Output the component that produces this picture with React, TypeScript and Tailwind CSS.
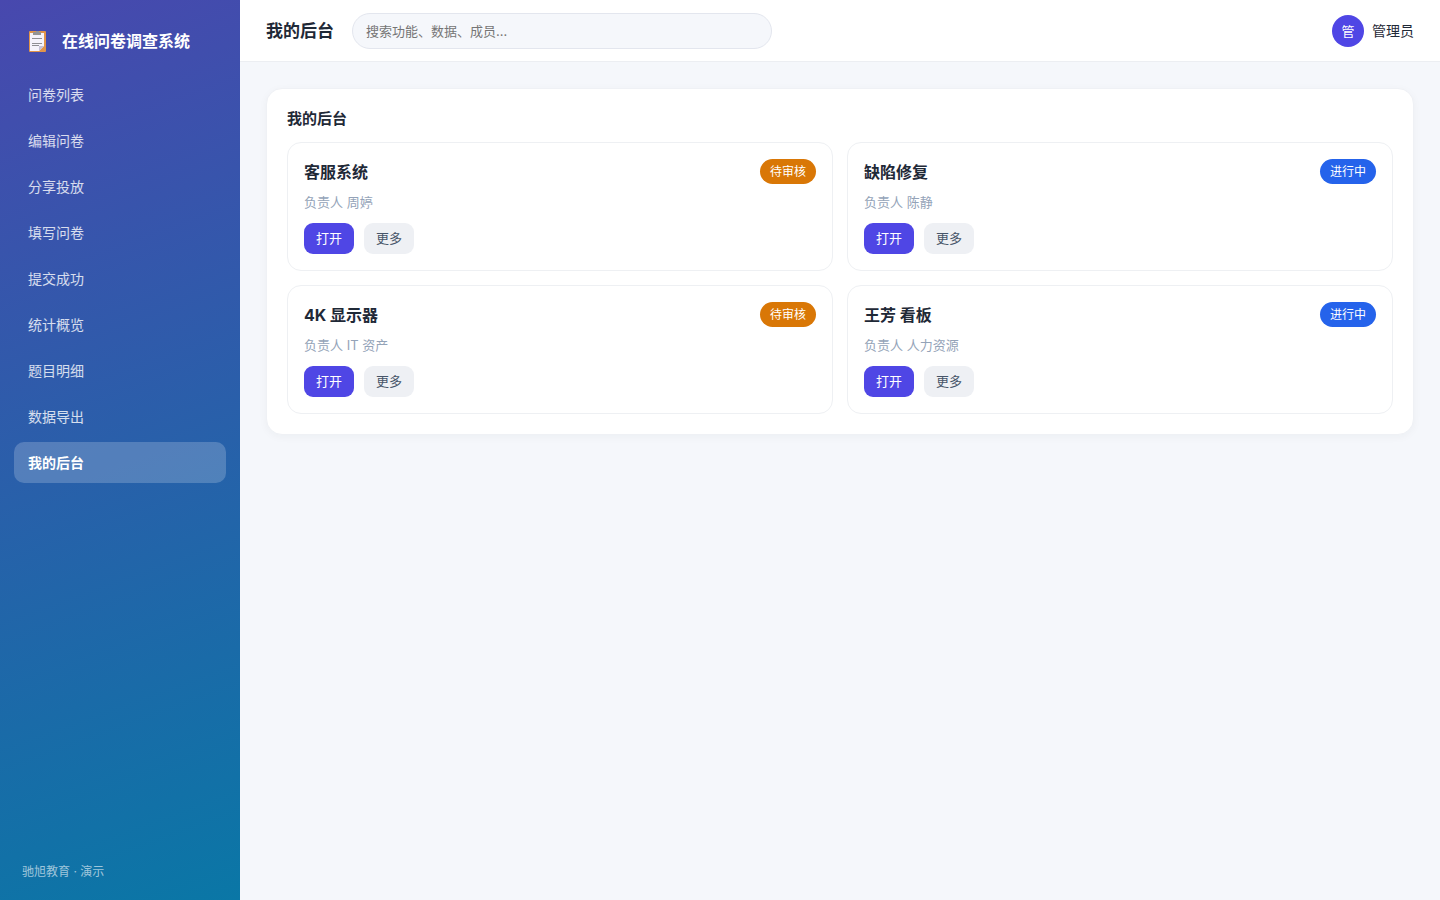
import React from "react";

const menu = [
  "问卷列表",
  "编辑问卷",
  "分享投放",
  "填写问卷",
  "提交成功",
  "统计概览",
  "题目明细",
  "数据导出",
  "我的后台",
];

const cards = [
  { title: "客服系统", owner: "周婷", status: "待审核" },
  { title: "缺陷修复", owner: "陈静", status: "进行中" },
  { title: "4K 显示器", owner: "IT 资产", status: "待审核" },
  { title: "王芳 看板", owner: "人力资源", status: "进行中" },
];

const ClipboardIcon = () => (
  <svg width="17" height="21" viewBox="0 0 17 21" aria-hidden="true">
    <rect width="17" height="21" rx="1" fill="#e0944a" />
    <path d="M1 2h14v13l-5 5H1z" fill="#f5f3fb" />
    <path d="M15 15l-5 5v-5z" fill="#c5c1d8" />
    <path d="M4 1h3V0h3v1h2v3H4z" fill="#949494" />
    <path d="M3 7.5h10M3 12.5h10M3 14.5h7" stroke="#8f8f94" />
  </svg>
);

const Sidebar = () => {
  return (
    <aside className="flex w-60 shrink-0 flex-col bg-[linear-gradient(160deg,#4848ae,#0a77a6)] px-[14px] py-5 text-white">
      <div className="flex items-center gap-4 px-[15px] pb-3">
        <ClipboardIcon />
        <span className="text-base leading-[42px] font-bold">
          在线问卷调查系统
        </span>
      </div>
      <nav className="flex flex-col gap-[5px]">
        {menu.map((item) => (
          <a
            key={item}
            href="#"
            className={
              item === "我的后台"
                ? "rounded-[10px] bg-white/20 px-[14px] py-[10px] text-sm leading-[21px] font-bold"
                : "rounded-[10px] px-[14px] py-[10px] text-sm leading-[21px] text-white/80"
            }
          >
            {item}
          </a>
        ))}
      </nav>
      <p className="mt-auto px-2 text-xs leading-4 text-white/60">
        驰旭教育 · 演示
      </p>
    </aside>
  );
};

const Header = () => {
  return (
    <header className="flex items-center border-b border-[#eceef2] bg-white px-[26px] pt-[13px] pb-3">
      <h1 className="mr-[18px] text-[17px] leading-6 font-bold">我的后台</h1>
      <input
        type="search"
        aria-label="搜索"
        placeholder="搜索功能、数据、成员…"
        className="h-9 w-[420px] rounded-full border border-[#e3e6ee] bg-[#f5f7fb] px-[13px] text-[13px] placeholder:text-[#757575]"
      />
      <div className="ml-auto flex items-center gap-2 text-sm">
        <span className="flex size-8 items-center justify-center rounded-full bg-[#4f46e5] text-[13px] text-white">
          管
        </span>
        管理员
      </div>
    </header>
  );
};

const Card = ({ title, owner, status }: (typeof cards)[number]) => {
  return (
    <article className="rounded-[14px] border border-[#eef0f3] bg-white p-4">
      <div className="flex items-start justify-between">
        <h3 className="text-base leading-[27px] font-bold">{title}</h3>
        <span
          className={
            status === "待审核"
              ? "rounded-full bg-[#d97706] px-[10px] text-xs leading-[25px] text-white"
              : "rounded-full bg-[#2563eb] px-[10px] text-xs leading-[25px] text-white"
          }
        >
          {status}
        </span>
      </div>
      <p className="mt-[7px] mb-[11px] text-[13px] leading-[19px] text-[#94a3b8]">
        负责人 {owner}
      </p>
      <div className="flex gap-[10px]">
        <button className="rounded-[9px] bg-[#4f46e5] px-3 text-[13px] leading-[31px] text-white">
          打开
        </button>
        <button className="rounded-[9px] bg-[#eef0f4] px-3 text-[13px] leading-[31px] text-[#475569]">
          更多
        </button>
      </div>
    </article>
  );
};

const App = () => {
  return (
    <div className="flex min-h-screen bg-[#f5f7fb] font-['Inter','Noto_Sans_CJK_SC',sans-serif] text-[#1f2937]">
      <Sidebar />
      <div className="flex min-w-0 flex-1 flex-col">
        <Header />
        <main className="p-[26px]">
          <section className="rounded-2xl border border-[#eff1f5] bg-white p-5 shadow-[0_2px_8px_rgba(30,41,59,0.04)]">
            <h2 className="mb-[14px] text-[15px] leading-[19px] font-bold">
              我的后台
            </h2>
            <div className="grid grid-cols-2 gap-[14px]">
              {cards.map((card) => (
                <Card key={card.title} {...card} />
              ))}
            </div>
          </section>
        </main>
      </div>
    </div>
  );
};

export default App;
